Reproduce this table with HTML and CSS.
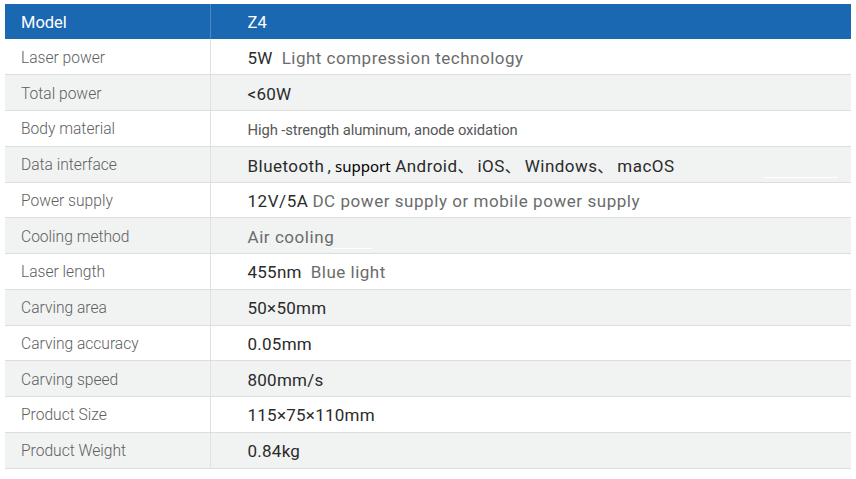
FILE: index.html
```html
<!DOCTYPE html>
<html lang="en">
<head>
<meta charset="utf-8">
<title>Z4 Specifications</title>
<link rel="stylesheet" href="styles.css">
</head>
<body>
<table class="spec">
  <thead>
    <tr><th class="k">Model</th><th class="v">Z4</th></tr>
  </thead>
  <tbody>
    <tr><td class="k">Laser power</td><td class="v"><span class="strong">5W</span><span class="soft gap wide2">Light compression technology</span></td></tr>
    <tr><td class="k">Total power</td><td class="v"><span class="strong">&lt;60W</span></td></tr>
    <tr><td class="k">Body material</td><td class="v"><span class="small">High -strength aluminum, anode oxidation</span></td></tr>
    <tr><td class="k">Data interface</td><td class="v"><span class="strong wide3">Bluetooth</span><span class="strong comma">,</span><span class="yahei">support</span><span class="strong wide3"> Android</span><span class="cjk">、</span><span class="strong wide3">iOS</span><span class="cjk">、</span><span class="strong wide3">Windows</span><span class="cjk">、</span><span class="strong wide3">macOS</span><span class="patch p1"></span></td></tr>
    <tr><td class="k">Power supply</td><td class="v"><span class="strong wide">12V/5A</span> <span class="soft wide">DC power supply or mobile power supply</span></td></tr>
    <tr><td class="k">Cooling method</td><td class="v"><span class="soft wide">Air cooling</span><span class="patch p2"></span></td></tr>
    <tr><td class="k">Laser length</td><td class="v"><span class="strong">455nm</span><span class="soft gap wide2">Blue light</span></td></tr>
    <tr><td class="k">Carving area</td><td class="v"><span class="strong">50×50mm</span></td></tr>
    <tr><td class="k">Carving accuracy</td><td class="v"><span class="strong">0.05mm</span></td></tr>
    <tr><td class="k">Carving speed</td><td class="v"><span class="strong">800mm/s</span></td></tr>
    <tr><td class="k">Product Size</td><td class="v"><span class="strong">115×75×110mm</span></td></tr>
    <tr><td class="k">Product Weight</td><td class="v"><span class="strong">0.84kg</span></td></tr>
  </tbody>
</table>
</body>
</html>
```

FILE: styles.css
```css
html, body {
  margin: 0;
  padding: 0;
  background: #ffffff;
}
body {
  padding: 4px 5px 0 5px;
  font-family: Roboto, "Noto Sans", sans-serif;
}
.spec {
  width: 846px;
  border-collapse: collapse;
  table-layout: fixed;
}
.spec th, .spec td {
  height: 35.75px;
  padding: 2px 0 0 0;
  text-align: left;
  vertical-align: middle;
  box-sizing: border-box;
  white-space: nowrap;
}
.spec .k {
  width: 205px;
  padding-left: 16px;
}
.spec .v {
  padding-left: 37px;
  position: relative;
}
.spec thead tr {
  background: #1a67b2;
}
.spec th {
  color: #ffffff;
  font-weight: 400;
  font-size: 16.5px;
  height: 35px;
}
.spec th.k {
  border-right: 1px solid #4f86c4;
}
.spec tbody td {
  border-bottom: 1.5px solid #dcdede;
}
.spec tbody td.k {
  border-right: 1px solid #e0e2e2;
  color: #5e6060;
  font-size: 15.6px;
  font-weight: 300;
}
.spec tbody tr:nth-child(even) {
  background: #f1f2f2;
}
.strong {
  color: #2a2b2b;
  font-size: 17px;
  letter-spacing: 0.25px;
}
.soft {
  color: #6a6c6c;
  font-size: 17px;
  letter-spacing: 0.2px;
}
.wide {
  letter-spacing: 0.55px;
}
.wide2 {
  letter-spacing: 0.5px;
}
.wide3 {
  letter-spacing: 0.45px;
}
.gap {
  margin-left: 9px;
}
.comma {
  margin: 0 4px 0 3px;
}
.small {
  color: #565858;
  font-size: 14.8px;
  letter-spacing: -0.1px;
}
.cjk {
  font-family: "Noto Sans CJK SC", sans-serif;
  color: #2a2b2b;
  font-size: 16px;
  display: inline-block;
  width: 20px;
}
.yahei {
  font-family: "Noto Sans", "Noto Sans CJK SC", sans-serif;
  color: #000000;
  font-size: 15px;
}
.patch {
  position: absolute;
  height: 1px;
  background: #ffffff;
}
.p1 {
  left: 552px;
  width: 75px;
  bottom: 4px;
}
.p2 {
  left: 121px;
  width: 40px;
  bottom: 4px;
}
```
